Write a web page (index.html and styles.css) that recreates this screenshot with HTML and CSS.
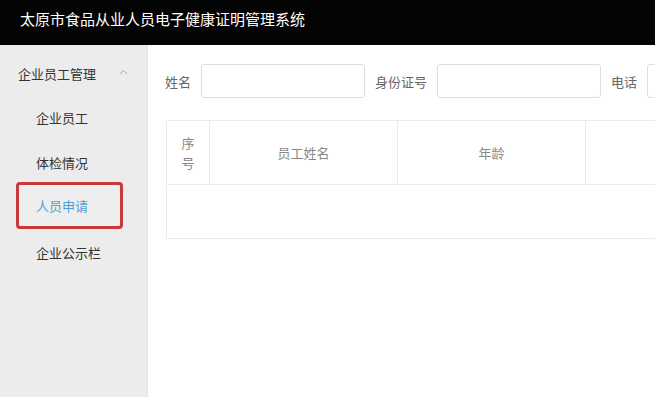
FILE: index.html
```html
<!DOCTYPE html>
<html lang="zh-CN">
<head>
    <meta charset="UTF-8">
    <meta name="viewport" content="width=device-width, initial-scale=1.0">
    <title>太原市食品从业人员电子健康证明管理系统</title>
    <link rel="stylesheet" href="styles.css">
</head>
<body>
    <div class="header">太原市食品从业人员电子健康证明管理系统</div>

    <div class="page">
        <div class="sidebar">
            <div class="menu-title">
                <span>企业员工管理</span>
                <svg class="chevron" width="9" height="6" viewBox="0 0 9 6"><path d="M1 5 L4.5 1.5 L8 5" fill="none" stroke="#aaa" stroke-width="1"/></svg>
            </div>
            <div class="menu-item">企业员工</div>
            <div class="menu-item">体检情况</div>
            <div class="menu-item active">人员申请</div>
            <div class="menu-item">企业公示栏</div>
        </div>

        <div class="main">
            <div class="search">
                <span class="label">姓名</span>
                <input class="field" type="text">
                <span class="label">身份证号</span>
                <input class="field" type="text">
                <span class="label">电话</span>
                <input class="field" type="text">
            </div>

            <table class="grid">
                <tr class="grid-head">
                    <th class="col-no">序号</th>
                    <th class="col-wide">员工姓名</th>
                    <th class="col-wide">年龄</th>
                    <th class="col-last"></th>
                </tr>
                <tr class="grid-body">
                    <td></td>
                    <td></td>
                    <td></td>
                    <td></td>
                </tr>
            </table>
        </div>
    </div>
</body>
</html>
```

FILE: styles.css
```css
body{
    margin: 0;
    font-family: "Noto Sans CJK SC", "Liberation Sans", sans-serif;
    width: 655px;
    height: 397px;
    overflow: hidden;
    background-color: white;
}
.header{
    height: 45px;
    box-sizing: border-box;
    background-color: #040404;
    color: white;
    font-size: 15px;
    padding-left: 20px;
    padding-top: 8px;
    line-height: 22px;
}
.page{
    display: flex;
    height: 352px;
}
.sidebar{
    width: 148px;
    flex-shrink: 0;
    background-color: #ececec;
    border-right: 1px solid #e4e4e4;
    box-sizing: border-box;
    padding-top: 15px;
}
.menu-title{
    display: flex;
    align-items: center;
    justify-content: space-between;
    height: 26px;
    padding-left: 18px;
    padding-right: 19px;
    font-size: 13px;
    color: #333;
}
.chevron{
    margin-top: -2px;
}
.menu-item{
    margin-left: 16px;
    width: 107px;
    height: 45px;
    box-sizing: border-box;
    display: flex;
    align-items: center;
    padding-left: 20px;
    font-size: 13px;
    color: #333;
}
.menu-title + .menu-item{
    margin-top: 9px;
}
.menu-item.active{
    color: #4f9fd6;
    border: 3px solid #c9393c;
    border-radius: 4px;
    padding-left: 17px;
    height: 47px;
    margin-top: -3px;
    margin-bottom: 1px;
    background-color: #efeeef;
}
.main{
    flex: 1;
    overflow: hidden;
    padding-top: 19px;
    padding-left: 17px;
}
.search{
    display: flex;
    align-items: center;
    white-space: nowrap;
}
.label{
    font-size: 13px;
    color: #666;
    margin-right: 10px;
}
.field{
    width: 164px;
    height: 34px;
    box-sizing: border-box;
    border: 1px solid #dedede;
    border-radius: 3px;
    margin: 0 10px 0 0;
    flex-shrink: 0;
}
.grid{
    margin-top: 22px;
    margin-left: 1px;
    border-collapse: collapse;
    border: 1px solid #ebebeb;
    width: 717px;
    table-layout: fixed;
}
.grid th{
    font-weight: normal;
    font-size: 13px;
    color: #888;
    height: 63px;
    border-right: 1px solid #ebebeb;
    border-bottom: 1px solid #ebebeb;
    line-height: 20px;
    padding: 0;
}
.col-no{
    width: 43px;
    padding: 0 14px !important;
    box-sizing: border-box;
}
.col-wide{
    width: 187px;
}
.col-last{
    width: 300px;
}
.grid-body td{
    height: 53px;
    padding: 0;
}
```
